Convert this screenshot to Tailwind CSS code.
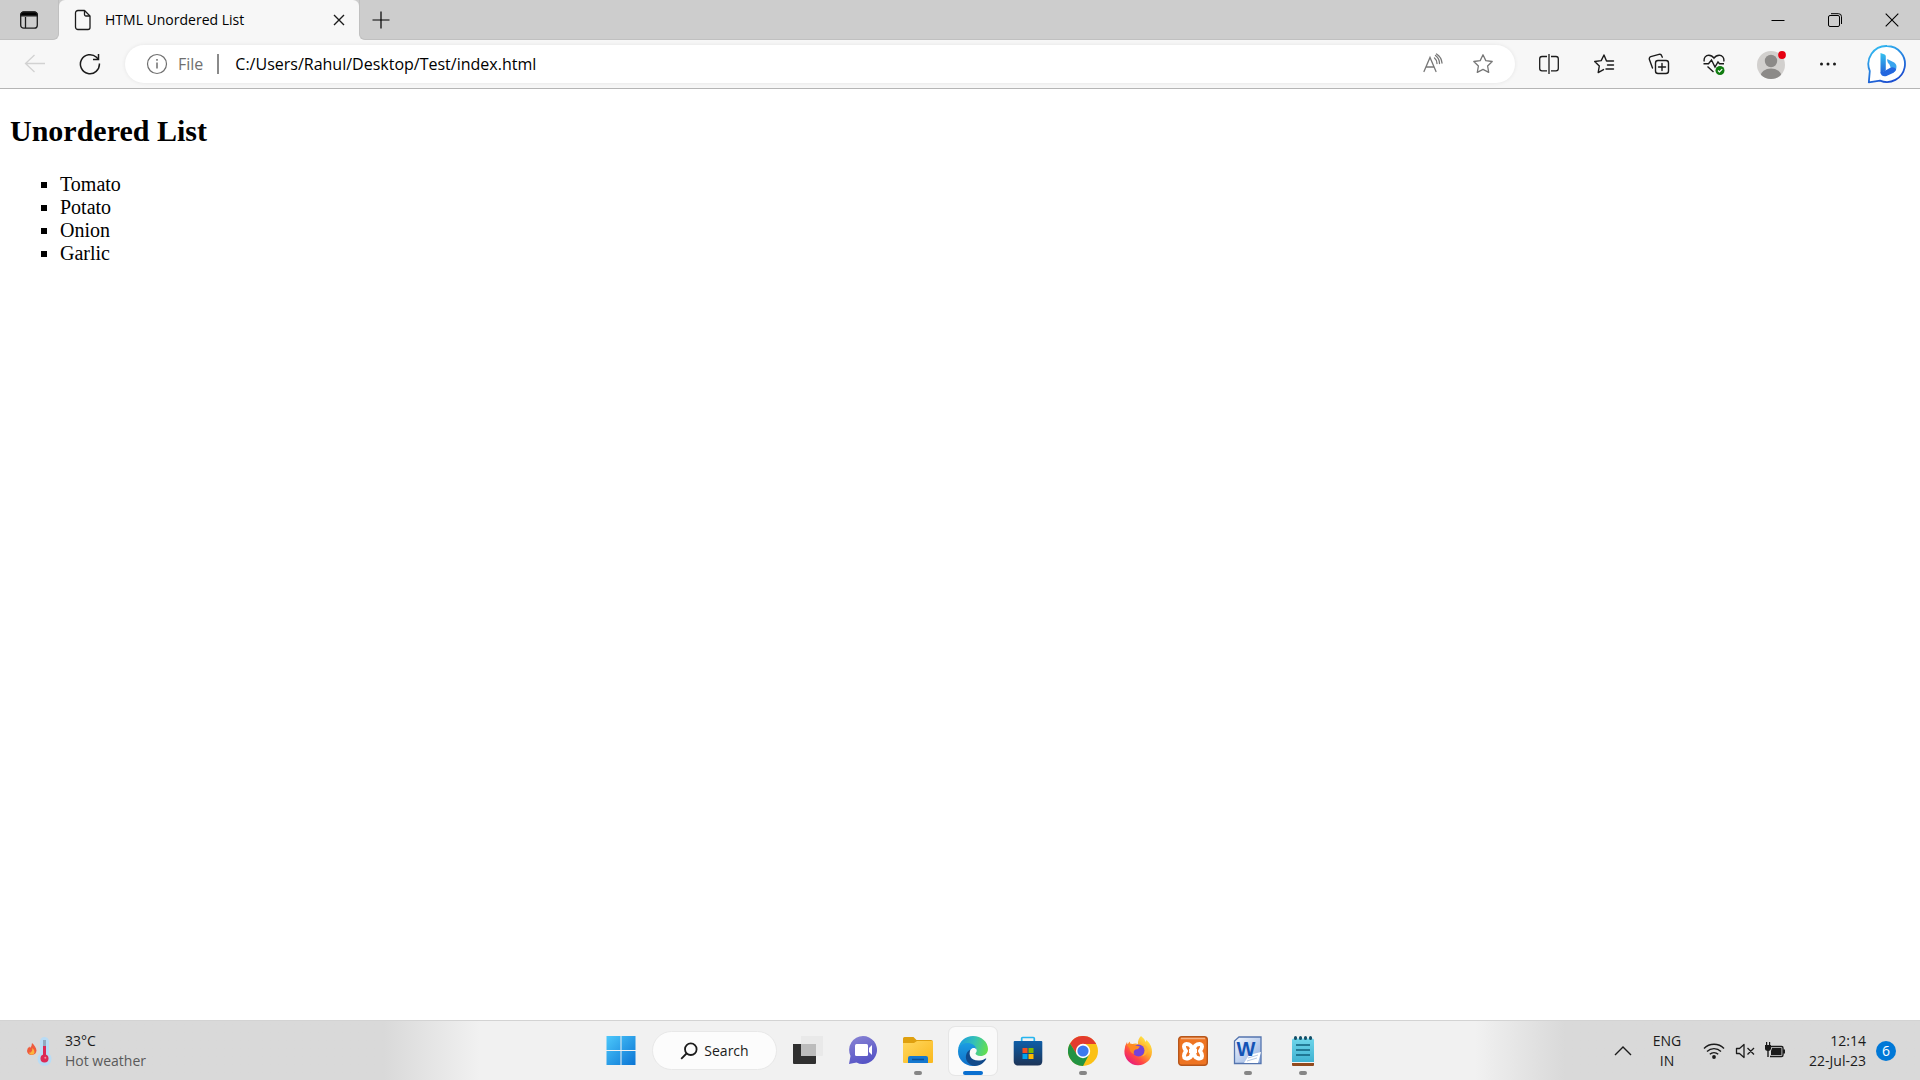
<!DOCTYPE html>
<html lang="en">
<head>
    <meta charset="UTF-8" />
    <meta name="viewport" content="width=device-width, initial-scale=1.0"/>
    <title>HTML Unordered List</title>
    <script src="https://cdn.jsdelivr.net/npm/@tailwindcss/browser@4"></script>
</head>
<body class="min-h-screen flex flex-col bg-white text-black font-['Segoe_UI','Open_Sans',sans-serif]">

<header class="bg-[#f7f7f7] border-b border-[#b5b5b5]">
    <!-- tab strip -->
    <div class="flex h-10">
        <div class="w-[59px] bg-[#cdcdcd] rounded-br-md border-b border-r border-[#c0c0c0] flex items-center justify-center">
            <button type="button" aria-label="Tab actions">
                <svg class="block" width="20" height="20" viewBox="0 0 20 20" fill="none" stroke="#1b1b1b" stroke-width="1.3"><rect x="1.7" y="2.2" width="16.6" height="16" rx="3"/><path d="M6.5 7v11"/><path d="M1.7 5.8V5a3 3 0 0 1 3-3h10.6a3 3 0 0 1 3 3v.8z" fill="#000"/></svg>
            </button>
        </div>
        <div class="w-[300px] bg-[#cdcdcd]">
            <div class="h-full bg-[#f7f7f7] rounded-t-md flex items-center pl-3.5 pr-3">
                <svg class="shrink-0" width="20" height="22" viewBox="0 0 20 22" fill="none" stroke="#1b1b1b" stroke-width="1.3" stroke-linejoin="round"><path d="M5 1.5h6.500l5.500 5.500v11.500a2 2 0 0 1-2 2H5a2.500 2.500 0 0 1-2.500-2.500V4A2.500 2.500 0 0 1 5 1.500z"/><path d="M11.500 1.500v4a1.500 1.500 0 0 0 1.500 1.500h4"/></svg>
                <span class="ml-3 flex-1 text-[14px] leading-5">HTML Unordered List</span>
                <button type="button" aria-label="Close tab">
                    <svg class="block" width="16" height="16" viewBox="0 0 16 16" stroke="#1b1b1b" stroke-width="1.4"><path d="M3 3l10 10M13 3L3 13"/></svg>
                </button>
            </div>
        </div>
        <div class="flex-1 flex bg-[#cdcdcd] rounded-bl-md border-b border-l border-[#c0c0c0]">
            <button type="button" aria-label="New tab" class="w-[42px] flex items-center justify-center">
                <svg width="20" height="20" viewBox="0 0 20 20" stroke="#000" stroke-width="1.2"><path d="M1.500 10h17M10 1.500v17"/></svg>
            </button>
            <div class="flex ml-auto">
                <button type="button" aria-label="Minimize" class="w-[57px] flex items-center justify-center">
                    <svg width="14" height="14" viewBox="0 0 14 14" stroke="#000"><path d="M.5 7.500h13"/></svg>
                </button>
                <button type="button" aria-label="Restore" class="w-[57px] flex items-center justify-center">
                    <svg width="14" height="14" viewBox="0 0 14 14" fill="none" stroke="#000"><rect x=".5" y="2.500" width="11" height="11" rx="1.500"/><path d="M3 .7h7.500a3 3 0 0 1 3 3V11"/></svg>
                </button>
                <button type="button" aria-label="Close window" class="w-[57px] flex items-center justify-center">
                    <svg width="14" height="14" viewBox="0 0 14 14" stroke="#000" stroke-width="1.1"><path d="M.7.7l12.600 12.600M13.300.7L.7 13.300"/></svg>
                </button>
            </div>
        </div>
    </div>

    <!-- toolbar -->
    <div class="flex items-center h-12 pl-[7px] pr-0.5 text-[#1b1b1b]">
        <button type="button" aria-label="Back" class="w-[55px] flex justify-center">
            <svg width="22" height="22" viewBox="0 0 22 22" fill="none" stroke="#d2d2d2" stroke-width="1.3"><path d="M21 10.500H1.500M10.500 2L1.500 10.500l9 8.500"/></svg>
        </button>
        <button type="button" aria-label="Refresh" class="w-[55px] flex justify-center">
            <svg width="22" height="22" viewBox="0 0 22 22" fill="none" stroke="#1b1b1b" stroke-width="1.5"><path d="M20.400 10.500A9.500 9.500 0 1 1 17.500 4.300L19 6"/><path d="M19.500 1v5.500H14"/></svg>
        </button>
        <div class="flex-1 flex items-center h-[38px] ml-2 mr-1.5 pl-[21px] pr-[21px] bg-white rounded-full shadow-[0_0_4px_rgba(0,0,0,0.08)]">
            <svg class="shrink-0" width="22" height="22" viewBox="0 0 22 22" fill="none" stroke="#6f6f6f" stroke-width="1.2"><circle cx="11" cy="11" r="9.500"/><path d="M11 9.500v6M11 6v1.700" stroke-width="1.5"/></svg>
            <span class="ml-2.5 text-[16px] leading-6 text-[#6f6f6f]">File</span>
            <span class="ml-3.5 w-0.5 h-5 bg-[#8a8a8a]"></span>
            <input type="text" aria-label="Address" value="C:/Users/Rahul/Desktop/Test/index.html" class="ml-4 flex-1 min-w-0 text-[16px] leading-6 text-black outline-none" />
            <button type="button" aria-label="Read aloud" class="mr-7">
                <svg class="block" width="22" height="22" viewBox="0 0 22 22" fill="none" stroke="#777" stroke-width="1.3" stroke-linecap="round"><path d="M2 18.500L8 4.500l6 14M4.200 14h7.600"/><path d="M12.500 5a7 7 0 0 1 2.500 5.500M13.500 2.500a10 10 0 0 1 4 8M14.500 1A12 12 0 0 1 20 10"/></svg>
            </button>
            <button type="button" aria-label="Add to favorites">
                <svg class="block" width="22" height="22" viewBox="0 0 22 22" fill="none" stroke="#777" stroke-width="1.3" stroke-linejoin="round"><path d="M11 1.800l2.800 5.800 6.400.9-4.600 4.500 1.100 6.400-5.700-3-5.700 3 1.100-6.400L1.800 8.500l6.400-.9z"/></svg>
            </button>
        </div>
        <button type="button" aria-label="Split screen" class="w-[55px] flex justify-center">
            <svg width="22" height="22" viewBox="0 0 22 22" fill="none" stroke="currentColor" stroke-width="1.3"><path d="M9 3.500H4a2.300 2.300 0 0 0-2.300 2.300v9.700A2.300 2.300 0 0 0 4 17.800h5M13 3.500h5a2.300 2.300 0 0 1 2.300 2.300v9.700a2.300 2.300 0 0 1-2.300 2.300h-5M11 1v20"/></svg>
        </button>
        <button type="button" aria-label="Favorites" class="w-[55px] flex justify-center">
            <svg width="22" height="22" viewBox="0 0 22 22" fill="none" stroke="currentColor" stroke-width="1.4" stroke-linejoin="round" stroke-linecap="round"><path d="M20.500 8h-7L11 2 8.200 7.600l-6.500.9L6.300 13l-1.100 6.600 5.300-3"/><path d="M14.500 12h6M13 16h7.500"/></svg>
        </button>
        <button type="button" aria-label="Collections" class="w-[55px] flex justify-center">
            <svg width="22" height="22" viewBox="0 0 22 22" fill="none" stroke="currentColor" stroke-width="1.4" stroke-linecap="round"><rect x="7.500" y="7.500" width="13" height="13" rx="2.500"/><path d="M14 10.500v7M10.500 14h7M4.500 15L1.400 6.500a2.200 2.200 0 0 1 1.400-2.800L11 1.300a2.200 2.200 0 0 1 2.700 1.400l.6 1.500"/></svg>
        </button>
        <button type="button" aria-label="Browser essentials" class="w-[55px] flex justify-center">
            <svg width="22" height="22" viewBox="0 0 22 22" fill="none" stroke="currentColor" stroke-width="1.4"><path d="M1.200 8.500C.5 4.500 3 2.200 5.800 2.200c2.400 0 4 1.300 5.200 3 1.200-1.700 2.800-3 5.200-3 2.800 0 5.300 2.300 4.600 6.300M4.500 13.500l6 5.500"/><path d="M.5 10.700h5L8.500 7l3.500 7 3-5 1.500 1.700h4.500"/><circle cx="17" cy="17.500" r="4.500" fill="#107c10" stroke="none"/><path d="M15 17.500l1.500 1.500 2.700-2.800" stroke="#fff" stroke-width="1.2"/></svg>
        </button>
        <button type="button" aria-label="Profile" class="w-[59px] flex justify-center">
            <svg width="30" height="30" viewBox="0 0 30 30"><clipPath id="face"><circle cx="15" cy="16" r="14"/></clipPath><circle cx="15" cy="16" r="14" fill="#d2d0ce"/><g clip-path="url(#face)" fill="#8c8a88"><circle cx="15" cy="12" r="6.200"/><ellipse cx="15" cy="27" rx="10.500" ry="7.500"/></g><circle cx="26" cy="6" r="3.900" fill="#e60012"/></svg>
        </button>
        <button type="button" aria-label="Settings and more" class="w-[55px] flex justify-center">
            <svg width="22" height="22" viewBox="0 0 22 22" fill="#1b1b1b"><circle cx="4.500" cy="11" r="1.500"/><circle cx="11" cy="11" r="1.500"/><circle cx="17.500" cy="11" r="1.500"/></svg>
        </button>
        <button type="button" aria-label="Bing chat" class="w-[63px] flex justify-center">
            <svg width="40" height="40" viewBox="0 0 40 40"><defs><linearGradient id="ring" x1="0" y1="0" x2=".5" y2="1"><stop offset="0" stop-color="#35c5f4"/><stop offset="1" stop-color="#1b4fd0"/></linearGradient><linearGradient id="bing" x1="0" y1="0" x2="0" y2="1"><stop offset="0" stop-color="#36c3f0"/><stop offset="1" stop-color="#2463d8"/></linearGradient></defs><path d="M20 2a18 18 0 1 1-7 34.600L1.800 38.300l1-11.300A18 18 0 0 1 20 2z" fill="#fff" stroke="url(#ring)" stroke-width="1.800" stroke-linejoin="round"/><path d="M13.500 9l4.200 1.600q1.100.6 1.100 2v13.600l-5.300 3.200z" fill="url(#bing)"/><path d="M20 15.500q.4-.5 1.200-.1l6 3.200q3 2 2.100 6-.5 2.800-3.300 4.500l-2.300-5.500-1.500-3.600q-1.200-.7-1.600-2z" fill="#3aa5ef"/><path d="M13.500 28.500l5.300-2.300 5-2.700q3.400-1 5.400 1.700-.5 2.300-3.200 3.900l-6.500 3q-5 1.200-6-3.600z" fill="#2467df"/></svg>
        </button>
    </div>
</header>

<main class="flex-1 px-2.5 text-[20px] leading-[23px] font-['Times_New_Roman','Liberation_Serif',serif]">
    <h2 class="my-[25px] text-[30px] leading-[34px] font-bold">Unordered List</h2>
    <ul class="pl-[50px] list-[square]">
        <li>Tomato</li>
        <li>Potato</li>
        <li>Onion</li>
        <li>Garlic</li>
    </ul>
</main>

<footer class="h-[60px] grid grid-cols-[1fr_auto_1fr] items-center border-t border-[#d3d3d3] text-[14px] leading-5 text-[#1b1b1b] bg-linear-to-r from-[#d9d9d9] from-20% via-[#f1f1f1] via-25% to-[#f1f1f1]">
    <button type="button" class="flex items-center text-left pl-[26px]">
        <svg width="28" height="32" viewBox="0 0 28 32"><path d="M6 8q4 3.500 4.500 7.500a4.800 4.800 0 0 1-9.500.5q0-3 2.500-4.500l.5 1.500Q6 11 6 8z" fill="#ef5b3c"/><path d="M6.500 13q2 2 2 4a2.700 2.700 0 0 1-5.400 0q.5 1 1.500.5Q6.500 16 6.500 13z" fill="#fbb53c"/><path d="M14 6.500a4.500 4.500 0 0 1 9 0v12a7 7 0 1 1-9 0z" fill="#b9dcf5"/><path d="M17 5h3v7h-3z" fill="#8fa9c0"/><path d="M17 11h3v11h-3z" fill="#dc2955"/><circle cx="18.500" cy="23.500" r="4" fill="#dc2955"/><circle cx="19.300" cy="22.700" r="1" fill="#f58aa0"/></svg>
        <span class="ml-[11px]">33°C<br><span class="text-[#5a5a5a]">Hot weather</span></span>
    </button>

    <div class="flex items-center gap-[7px] pl-1">
        <button type="button" aria-label="Start" class="w-12 h-12 flex items-center justify-center">
            <svg width="30" height="30" viewBox="0 0 30 30"><defs><linearGradient id="win" x1="0" y1="0" x2="1" y2="1"><stop offset="0" stop-color="#4cc8fb"/><stop offset="1" stop-color="#0a74d4"/></linearGradient></defs><path d="M.5 0h14v14H.5zM15.500 0h14v14h-14zM.5 15h14v14H.5zM15.500 15h14v14h-14z" fill="url(#win)"/></svg>
        </button>
        <button type="button" class="w-[125px] h-[39px] flex items-center justify-center gap-1.5 bg-[#fcfcfc] border border-[#e8e8e8] rounded-full">
            <svg width="18" height="18" viewBox="0 0 18 18" fill="none" stroke="#1b1b1b" stroke-width="1.8"><circle cx="10.800" cy="7.200" r="5.800"/><path d="M6.500 11.500L1.200 16.800"/></svg>
            Search
        </button>
        <button type="button" aria-label="Task view" class="w-12 h-12 flex items-center justify-center">
            <svg width="30" height="30" viewBox="0 0 30 30"><path d="M0 8h23v19a1 1 0 0 1-1 1H1a1 1 0 0 1-1-1z" fill="#303030"/><path d="M8 0h22v19a1 1 0 0 1-1 1H8z" fill="#e9e9e9"/><path d="M8 8h15v12H8z" fill="#bcbcbc"/></svg>
        </button>
        <button type="button" aria-label="Chat" class="w-12 h-12 flex items-center justify-center">
            <svg width="30" height="30" viewBox="0 0 30 30"><defs><linearGradient id="chat" x1="0" y1="0" x2=".4" y2="1"><stop offset="0" stop-color="#8a85d4"/><stop offset="1" stop-color="#5755c6"/></linearGradient></defs><path d="M15 0a14 14 0 1 1-6.500 26.400L1 28l1.500-8A14 14 0 0 1 15 0z" fill="url(#chat)"/><rect x="7" y="8" width="13" height="12" rx="1.500" fill="#fff"/><path d="M21 12l3-3v10l-3-3z" fill="#fff"/></svg>
        </button>
        <button type="button" aria-label="File Explorer" class="relative w-12 h-12 flex items-center justify-center">
            <svg width="30" height="30" viewBox="0 0 30 30"><defs><linearGradient id="dir" x1="0" y1="0" x2="1" y2="1"><stop offset="0" stop-color="#ffd75e"/><stop offset="1" stop-color="#fab81c"/></linearGradient></defs><path d="M0 2.500Q0 1 1.500 1h9l3 3H28q2 0 2 2v4H0z" fill="#dfa00f"/><path d="M0 7h11l3-2h16v21q0 1-1 1H1q-1 0-1-1z" fill="url(#dir)"/><path d="M5 27v-5q0-2 2-2h16q2 0 2 2v5z" fill="#1578cf"/><path d="M9 23.500h12" stroke="#0c4f94" stroke-width="1.5"/></svg>
            <span class="absolute bottom-0 w-2 h-1 rounded-full bg-[#868686]"></span>
        </button>
        <button type="button" aria-label="Microsoft Edge" class="relative w-12 h-12 flex items-center justify-center bg-[#fafafa] rounded-md outline outline-[#e6e6e6]">
            <svg width="30" height="30" viewBox="0 0 30 30"><defs><linearGradient id="edgeTop" x1="0" y1=".4" x2="1" y2=".6"><stop offset="0" stop-color="#1b9de2"/><stop offset=".5" stop-color="#35c1b5"/><stop offset="1" stop-color="#66e04d"/></linearGradient><linearGradient id="edgeSide" x1="0" y1="0" x2="0" y2="1"><stop offset="0" stop-color="#1b9de2"/><stop offset="1" stop-color="#0f6fc9"/></linearGradient></defs><path d="M.3 12.500C1.500 5.200 7.500 0 15 0c8.500 0 15 6 15 13 0 4.500-3.500 7-7.500 7-3.500 0-5-1.400-5-2.400 0-.8 1.200-1.200 1.200-3.100C18.700 10.500 14 8.500 10 8.500c-4 0-8 1.500-9.700 4z" fill="url(#edgeTop)"/><path d="M.2 13C1 9.500 5 7 9.500 7c4 0 8.800 2.400 9.200 7-.9-1.800-3-2.400-4.700-1.500-4 2-4 8.500-1 12 2.200 2.600 4.500 4 7 4.700-1.600.6-3.300.8-5 .8C6.700 30 0 23.500 0 15.500z" fill="url(#edgeSide)"/><path d="M12.500 13.500c-2.500 5.500.5 12 9.500 11 2.500-.3 4.500-1.300 5.500-2 .6-.3 1 .2.600.8C25.500 27.500 21.500 30 16.500 30 11 29 7 24.500 8 19.500c.5-3 2.300-5 4.500-6z" fill="#114a8b"/></svg>
            <span class="absolute bottom-0 w-5 h-1 rounded-full bg-[#0a6fd0]"></span>
        </button>
        <button type="button" aria-label="Microsoft Store" class="w-12 h-12 flex items-center justify-center">
            <svg width="30" height="30" viewBox="0 0 30 30"><defs><linearGradient id="bag" x1="0" y1="0" x2="0" y2="1"><stop offset="0" stop-color="#0e5ea8"/><stop offset="1" stop-color="#1d3457"/></linearGradient></defs><path d="M8.700 6V2.500q0-1 1-1h10.600q1 0 1 1V6" fill="none" stroke="#25b5ef" stroke-width="1.7"/><path d="M.7 6q0-1 1-1h26.600q1 0 1 1v19q0 4.500-4.500 4.500H5.200Q.7 29.500.7 25z" fill="url(#bag)"/><path d="M9.500 12h5v5h-5z" fill="#f25022"/><path d="M15.500 12h5v5h-5z" fill="#7fba00"/><path d="M9.500 18h5v5h-5z" fill="#00a4ef"/><path d="M15.500 18h5v5h-5z" fill="#ffb900"/></svg>
        </button>
        <button type="button" aria-label="Google Chrome" class="relative w-12 h-12 flex items-center justify-center">
            <svg width="30" height="30" viewBox="0 0 30 30"><circle cx="15" cy="15" r="15" fill="#fbc116"/><path d="M2 7.500A15 15 0 0 1 28 7.500L28 8H15L8.900 18.500z" fill="#e33b2e"/><path d="M2 7.500A15 15 0 0 0 15 30l6.100-11.500L8.900 18.500z" fill="#229342"/><circle cx="15" cy="15" r="7.200" fill="#fff"/><circle cx="15" cy="15" r="5.600" fill="#3c79ee"/></svg>
            <span class="absolute bottom-0 w-2 h-1 rounded-full bg-[#868686]"></span>
        </button>
        <button type="button" aria-label="Firefox" class="w-12 h-12 flex items-center justify-center">
            <svg width="30" height="30" viewBox="0 0 30 30"><defs><linearGradient id="fox" x1=".9" y1=".1" x2=".2" y2="1"><stop offset="0" stop-color="#fff04a"/><stop offset=".4" stop-color="#ffa52a"/><stop offset=".7" stop-color="#ff4545"/><stop offset="1" stop-color="#e31587"/></linearGradient></defs><path d="M18 0q4 3 4.500 6l1-2Q29 9 29 16a13.800 13.800 0 0 1-27.600-1Q1.400 10 4 6l.6 2.500L6.500 5.500 8 9q4-2.300 7-1-.5-4.500 3-8z" fill="url(#fox)"/><circle cx="15.500" cy="14.500" r="6" fill="#7542d9"/><path d="M4 9q5-2.500 8.500.5l4.500 1q-1 2.500-4.500 3-3 2-1 4.500-5-.8-5-6z" fill="#ff8a22"/><path d="M17 8q5 1 5 6.500 0 4-4 6 6-1 7-6.500-1-6-8-6z" fill="#ffb433"/></svg>
        </button>
        <button type="button" aria-label="XAMPP" class="w-12 h-12 flex items-center justify-center">
            <svg width="30" height="30" viewBox="0 0 30 30"><rect x=".7" y=".7" width="28.600" height="28.600" rx="3" fill="#ee7422" stroke="#b6561b" stroke-width="1.4"/><path d="M3 2.500h24" stroke="#f5b183" stroke-width="1.5"/><path d="M11 8.500q-5-1.500-5 2 0 2 2 4.500-2 2.500-2 5 0 3.500 5 2 2.500-1 2.500-4h3q0 3 2.500 4 5 1.500 5-2 0-2.500-2-5 2-2.500 2-4.500 0-3.500-5-2-2.500 1-2.500 3.500h-3q0-2.500-2.500-3.500z" fill="none" stroke="#fff" stroke-width="4" stroke-linejoin="round"/><path d="M11 15h8" stroke="#fff" stroke-width="4"/></svg>
        </button>
        <button type="button" aria-label="Microsoft Word" class="relative w-12 h-12 flex items-center justify-center">
            <svg width="30" height="30" viewBox="0 0 30 30"><defs><linearGradient id="doc" x1="0" y1="0" x2="1" y2="1"><stop offset="0" stop-color="#f3f8ff"/><stop offset="1" stop-color="#8fade0"/></linearGradient></defs><path d="M6 1h22v26.500H1.500V5z" fill="url(#doc)" stroke="#5474ae" stroke-width="1.3"/><path d="M11 27l5-8 12-3-3 11z" fill="#fff"/><path d="M15 22l10-3M14 25l10-3" stroke="#b8c9e3"/><text x="13" y="20" text-anchor="middle" font-family="Liberation Sans, sans-serif" font-weight="700" font-size="20" fill="#1453b5">W</text></svg>
            <span class="absolute bottom-0 w-2 h-1 rounded-full bg-[#868686]"></span>
        </button>
        <button type="button" aria-label="Notepad" class="relative w-12 h-12 flex items-center justify-center">
            <svg width="30" height="30" viewBox="0 0 30 30"><defs><linearGradient id="pad" x1="0" y1="0" x2="0" y2="1"><stop offset="0" stop-color="#6fd5ea"/><stop offset="1" stop-color="#3fb2d2"/></linearGradient></defs><path d="M4 26h22v3q0 1-1 1H5q-1 0-1-1z" fill="#924a1d"/><path d="M4 25h22v2H4z" fill="#f2f2f2"/><path d="M4 4q0-1.500 1.500-1.500h19Q26 2.500 26 4v22H4z" fill="url(#pad)"/><path d="M8 9h14M8 14h14M8 19h14" stroke="#11607d" stroke-width="1.7"/><path d="M7.500 1.500v1M12.500 1.500v1M17.500 1.500v1M22.500 1.500v1" stroke="#15516a" stroke-width="3" stroke-linecap="round"/></svg>
            <span class="absolute bottom-0 w-2 h-1 rounded-full bg-[#868686]"></span>
        </button>
    </div>

    <div class="h-full flex items-center justify-end pr-6 bg-linear-to-r from-[#f1f1f1] from-25% to-[#d9d9d9] to-40%">
        <button type="button" aria-label="Show hidden icons">
            <svg class="block" width="18" height="18" viewBox="0 0 18 18" fill="none" stroke="#1b1b1b" stroke-width="1.4"><path d="M1 13l8-8 8 8"/></svg>
        </button>
        <button type="button" class="ml-5 w-[30px] text-center">ENG<br>IN</button>
        <button type="button" aria-label="Network, volume and battery" class="ml-[21px] flex items-center gap-2.5">
            <svg width="22" height="20" viewBox="0 0 22 20" fill="none" stroke="#1b1b1b" stroke-width="1.4"><path d="M1 7.500a14 14 0 0 1 20 0M4 10.500a10 10 0 0 1 14 0M6.800 13.300a6 6 0 0 1 8.400 0"/><circle cx="11" cy="16" r="1.900" fill="#1b1b1b" stroke="none"/></svg>
            <svg width="20" height="20" viewBox="0 0 20 20" fill="none" stroke="#1b1b1b" stroke-width="1.3" stroke-linejoin="round"><path d="M1.500 7.500h3L9 3.500v13l-4.500-4h-3zM12.500 7l6.500 6.500M19 7l-6.500 6.500"/></svg>
            <svg width="20" height="20" viewBox="0 0 20 20"><path d="M6 5.500h10.500q1.500 0 1.500 1.500v7q0 1.500-1.500 1.500H5" fill="none" stroke="#1b1b1b" stroke-width="1.4"/><path d="M7 7h9.500v7H6v-4z" fill="#1b1b1b"/><path d="M18 8.500h2v4h-2zM0 4h6v4q-1 2-2.300 2v6H2.300v-6Q0 9.500 0 8zM1 1h1.200v4H1zM4 1h1.200v4H4z" fill="#1b1b1b"/></svg>
        </button>
        <button type="button" class="ml-[19px] flex items-center gap-2.5">
            <span class="w-[62px] text-right">12:14<br>22-Jul-23</span>
            <span class="w-5 h-5 rounded-full bg-[#0078d7] text-white text-[14px] leading-5 text-center">6</span>
        </button>
    </div>
</footer>

</body>
</html>
